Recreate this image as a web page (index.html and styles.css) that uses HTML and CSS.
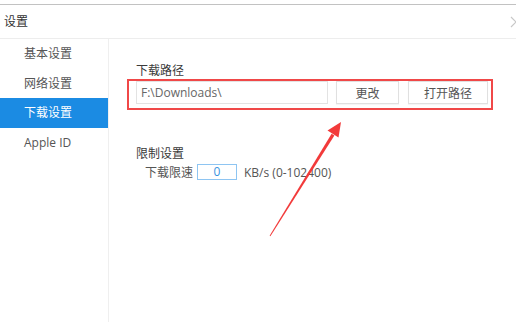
FILE: index.html
```html
<!DOCTYPE html>
<html lang="zh-CN">
<head>
<meta charset="utf-8">
<title>设置</title>
<link rel="stylesheet" href="styles.css">
</head>
<body>
<div class="window">
  <div class="titlebar">
    <span class="title">设置</span>
    <svg class="close" width="12" height="12" viewBox="0 0 12 12"><path d="M1 1 L11 11 M11 1 L1 11" stroke="#c8c8c8" stroke-width="1.2" fill="none"/></svg>
  </div>
  <div class="main">
    <nav class="sidebar">
      <div class="nav-item">基本设置</div>
      <div class="nav-item">网络设置</div>
      <div class="nav-item active">下载设置</div>
      <div class="nav-item">Apple ID</div>
    </nav>
    <section class="content">
      <div class="label">下载路径</div>
      <div class="path-row">
        <div class="path-input">F:\Downloads\</div>
        <button class="btn btn-change">更改</button>
        <button class="btn btn-open">打开路径</button>
        <div class="highlight"></div>
      </div>
      <div class="label label-limit">限制设置</div>
      <div class="speed-row">
        <span class="speed-label">下载限速</span>
        <span class="speed-input">0</span>
        <span class="speed-unit">KB/s (0-102400)</span>
      </div>
    </section>
  </div>
  <svg class="arrow" width="516" height="322" viewBox="0 0 516 322">
    <polygon points="270.4,236.3 269.6,235.7 331.6,133.8 334.4,135.6" fill="#f23a3a"/>
    <polygon points="341,122 338.5,137.5 327.5,130.5" fill="#f23a3a"/>
  </svg>
</div>
</body>
</html>
```
FILE: styles.css
```css
html, body {
  margin: 0;
  padding: 0;
  background: #ffffff;
  overflow: hidden;
}
body {
  width: 516px;
  height: 322px;
  font-family: "Open Sans", "Noto Sans CJK SC", sans-serif;
  font-size: 12px;
  color: #333;
}
.window {
  position: relative;
  width: 516px;
  height: 322px;
  padding-top: 4px;
  box-sizing: border-box;
  display: flex;
  flex-direction: column;
  overflow: hidden;
}
.titlebar {
  height: 33px;
  border-top: 1px solid #c2c2c2;
  border-bottom: 1px solid #ededed;
  display: flex;
  align-items: center;
  justify-content: space-between;
  padding-left: 4px;
  flex-shrink: 0;
}
.title {
  font-size: 12px;
  color: #333;
  line-height: 16px;
}
.close {
  margin-right: -6px;
}
.main {
  flex: 1;
  display: flex;
}
.sidebar {
  width: 108px;
  border-right: 1px solid #efefef;
  display: flex;
  flex-direction: column;
}
.nav-item {
  height: 29.5px;
  line-height: 29.5px;
  padding-left: 24px;
  color: #555;
  font-size: 12px;
}
.nav-item.active {
  background: #1b8be3;
  color: #fff;
}
.content {
  flex: 1;
  padding-left: 27px;
  padding-top: 24px;
}
.label {
  line-height: 16px;
  color: #3a3a3a;
}
.path-row {
  position: relative;
  display: flex;
  margin-top: 2px;
  height: 23px;
}
.path-input {
  width: 192px;
  height: 23px;
  box-sizing: border-box;
  border: 1px solid #e3e3e3;
  padding-left: 4px;
  line-height: 21px;
  color: #666;
}
.btn {
  height: 23px;
  box-sizing: border-box;
  border: 1px solid #e0e0e0;
  background: #fff;
  color: #555;
  font-family: "Open Sans", "Noto Sans CJK SC", sans-serif;
  font-size: 12px;
  padding: 0;
  box-shadow: 0 1px 1px rgba(0,0,0,0.04);
}
.btn-change {
  width: 63px;
  margin-left: 8px;
}
.btn-open {
  width: 80px;
  margin-left: 9px;
}
.highlight {
  position: absolute;
  left: -9px;
  top: -2px;
  width: 366px;
  height: 31px;
  border: 2px solid #f04848;
  box-sizing: border-box;
}
.label-limit {
  margin-top: 42px;
}
.speed-row {
  display: flex;
  align-items: center;
  margin-top: 2px;
  height: 16px;
}
.speed-label {
  margin-left: 9px;
  color: #555;
}
.speed-input {
  margin-left: 4px;
  width: 40px;
  height: 16px;
  box-sizing: border-box;
  border: 1px solid #8ec5f2;
  text-align: center;
  line-height: 14px;
  color: #3a93e0;
}
.speed-unit {
  margin-left: 7px;
  color: #555;
}
.arrow {
  position: absolute;
  left: 0;
  top: 0;
  pointer-events: none;
}
```
